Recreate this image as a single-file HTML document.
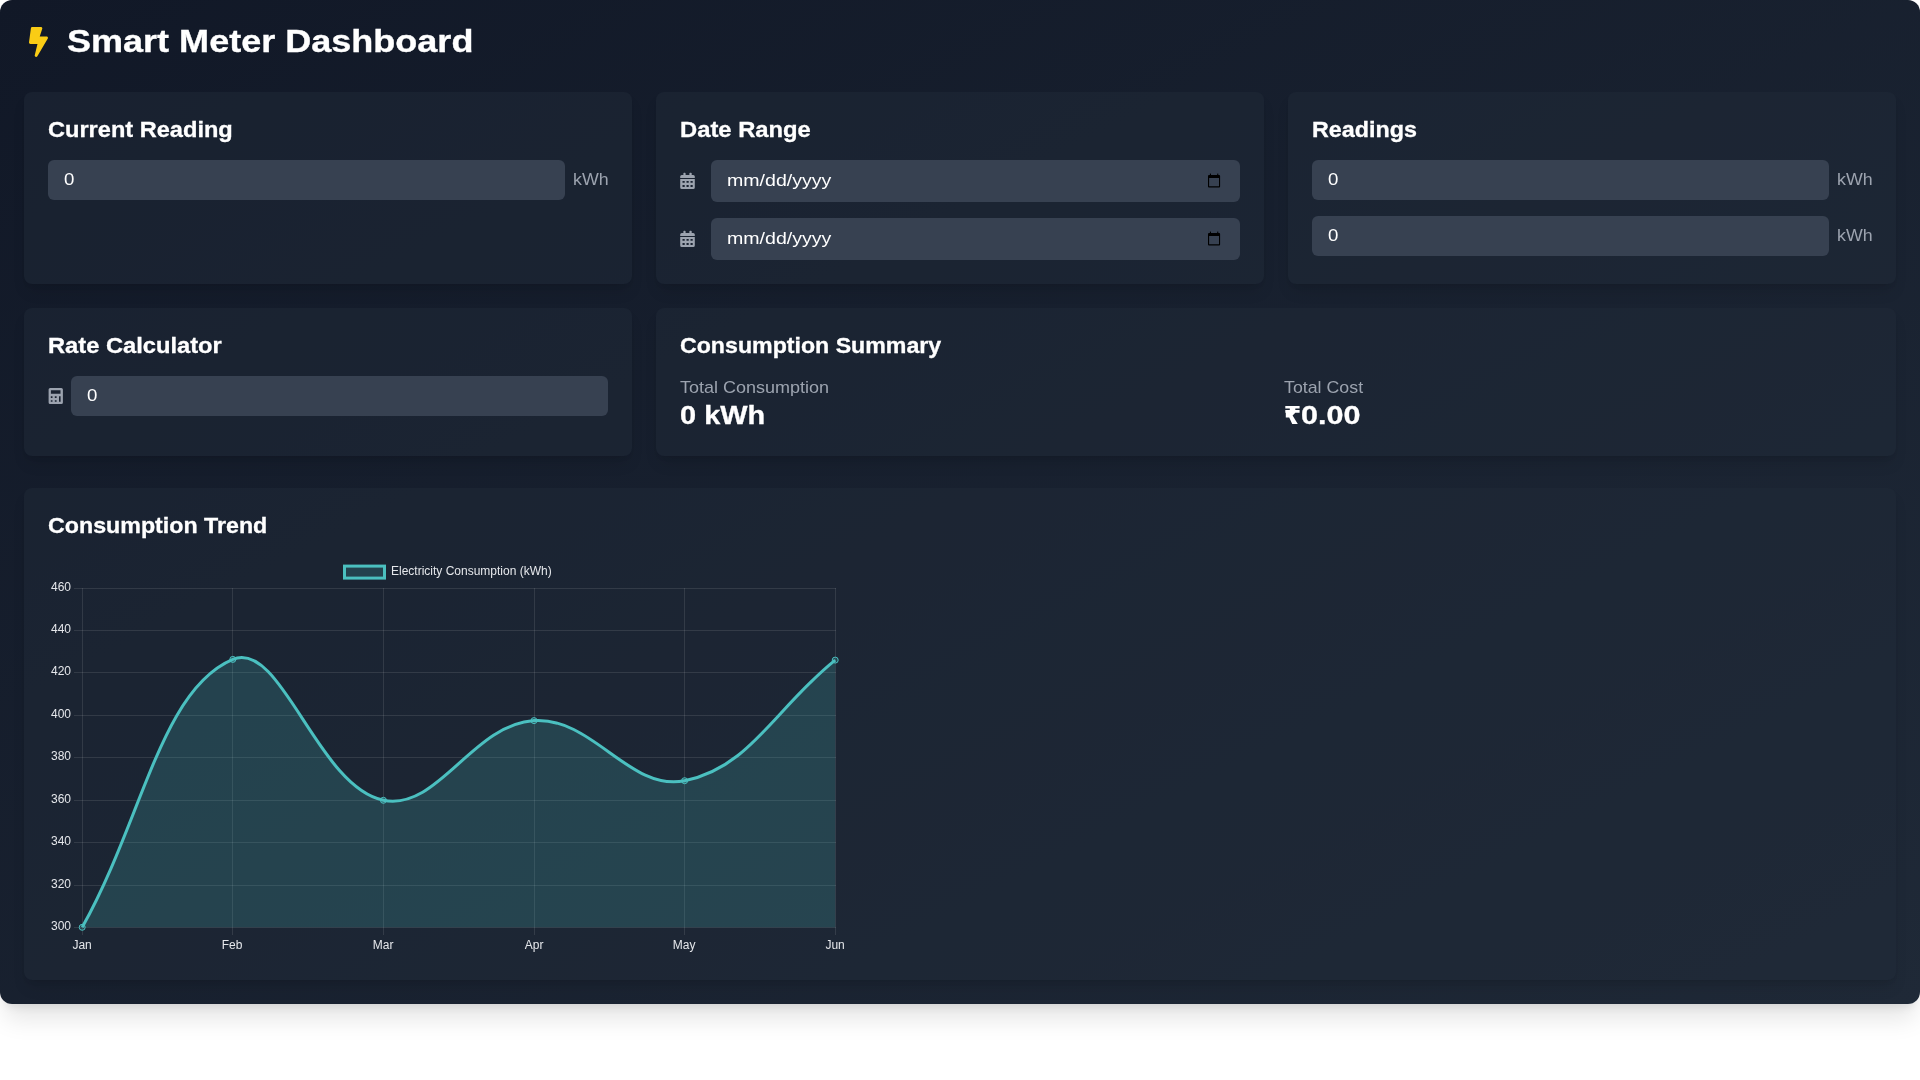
<!DOCTYPE html>
<html>
<head>
<meta charset="utf-8">
<style>
html,body{margin:0;padding:0;background:#ffffff;width:1920px;height:1080px;overflow:hidden;}
*{box-sizing:border-box;}
body{font-family:"Liberation Sans",sans-serif;color:#fff;}
#wrap{position:absolute;left:0;top:0;width:1920px;height:1004px;border-radius:12px;
  background:linear-gradient(to bottom right,#111827,#1f2937);
  box-shadow:0 20px 25px -5px rgba(0,0,0,0.1),0 8px 10px -6px rgba(0,0,0,0.1);}
.abs{position:absolute;}
.card{position:absolute;background:rgba(31,41,55,0.5);border-radius:8px;
  box-shadow:0 10px 15px -3px rgba(0,0,0,0.1),0 4px 6px -4px rgba(0,0,0,0.1);}
.t{position:absolute;white-space:nowrap;}
.t span{display:inline-block;transform-origin:0 50%;will-change:transform;}
.h1{left:67px;top:23.4px;height:36px;line-height:36px;font-size:31.8px;font-weight:bold;-webkit-text-stroke:0.35px #fff;}
.h2{left:24px;top:23.6px;height:28px;line-height:28px;font-size:21.2px;font-weight:bold;-webkit-text-stroke:0.3px #fff;}
.inp{position:absolute;background:#374151;border-radius:6px;height:40px;}
.val{position:absolute;left:16px;top:0;line-height:40px;font-size:16.96px;color:#fff;}
.unit{font-size:16.96px;line-height:24px;color:#9ca3af;}
.big{font-size:25.44px;line-height:32px;font-weight:bold;-webkit-text-stroke:0.3px #fff;}
.ico{position:absolute;}
</style>
</head>
<body>
<div id="wrap">
  <svg class="abs" style="left:29px;top:27px" width="19" height="30" viewBox="0 0 320 512" preserveAspectRatio="none"><path fill="#facc15" d="M296 160H180.6l42.6-129.8C227.2 15 215.7 0 200 0H56C44 0 33.8 8.9 32.2 20.8l-32 240C-1.7 275.2 9.5 288 24 288h118.7L96.6 482.5c-3.6 15.2 8 29.5 23.3 29.5 8.4 0 16.4-4.4 20.8-12l176-304c9.3-15.9-2.2-36-20.7-36z"/></svg>
  <div class="t h1"><span style="transform:scaleX(1.133)">Smart Meter Dashboard</span></div>

  <!-- Card 1 -->
  <div class="card" style="left:24px;top:92px;width:608px;height:192px;">
    <div class="t h2"><span style="transform:scaleX(1.113)">Current Reading</span></div>
    <div class="inp" style="left:24px;top:68px;width:517px;"><div class="t val"><span style="transform:scaleX(1.1)">0</span></div></div>
    <div class="t unit" style="left:549px;top:76px"><span style="transform:scaleX(1.052)">kWh</span></div>
  </div>

  <!-- Card 2 -->
  <div class="card" style="left:656px;top:92px;width:608px;height:192px;">
    <div class="t h2"><span style="transform:scaleX(1.122)">Date Range</span></div>
    <svg class="ico" style="left:24px;top:80px" width="15" height="18" viewBox="0 0 15 18"><g fill="#9ca3af"><rect x="3.4" y="0.8" width="2.2" height="3" rx="0.8"/><rect x="9.4" y="0.8" width="2.3" height="3" rx="0.8"/><path d="M0.2 4.6a1.6 1.6 0 0 1 1.6-1.6h11.4a1.6 1.6 0 0 1 1.6 1.6V5.9H0.2z"/><path fill-rule="evenodd" d="M0.2 7H14.8V15.4a1.6 1.6 0 0 1-1.6 1.6H1.8a1.6 1.6 0 0 1-1.6-1.6z M2.5 9.1h2.2v1.7H2.5z M6.5 9.1h2.2v1.7H6.5z M10.5 9.1h2.2v1.7h-2.2z M2.5 13.1h2.2v1.8H2.5z M6.5 13.1h2.2v1.8H6.5z M10.5 13.1h2.2v1.8h-2.2z"/></g></svg>
    <div class="inp" style="left:55px;top:68px;width:529px;height:42px;">
      <div class="t val" style="line-height:42px"><span style="transform:scaleX(1.155)">mm/dd/yyyy</span></div>
      <svg class="ico" style="left:496px;top:12px" width="15" height="17" viewBox="0 0 15 17"><g fill="#000"><rect x="2.9" y="1.6" width="1.1" height="2"/><rect x="10.2" y="1.6" width="1.1" height="2"/><path fill-rule="evenodd" d="M2 3.1h10.1a1 1 0 0 1 1 1v10.5a1 1 0 0 1-1 1H2a1 1 0 0 1-1-1V4.1a1 1 0 0 1 1-1z M2.1 5.9v8.3h9.9V5.9z"/></g></svg>
    </div>
    <svg class="ico" style="left:24px;top:138px" width="15" height="18" viewBox="0 0 15 18"><g fill="#9ca3af"><rect x="3.4" y="0.8" width="2.2" height="3" rx="0.8"/><rect x="9.4" y="0.8" width="2.3" height="3" rx="0.8"/><path d="M0.2 4.6a1.6 1.6 0 0 1 1.6-1.6h11.4a1.6 1.6 0 0 1 1.6 1.6V5.9H0.2z"/><path fill-rule="evenodd" d="M0.2 7H14.8V15.4a1.6 1.6 0 0 1-1.6 1.6H1.8a1.6 1.6 0 0 1-1.6-1.6z M2.5 9.1h2.2v1.7H2.5z M6.5 9.1h2.2v1.7H6.5z M10.5 9.1h2.2v1.7h-2.2z M2.5 13.1h2.2v1.8H2.5z M6.5 13.1h2.2v1.8H6.5z M10.5 13.1h2.2v1.8h-2.2z"/></g></svg>
    <div class="inp" style="left:55px;top:126px;width:529px;height:42px;">
      <div class="t val" style="line-height:42px"><span style="transform:scaleX(1.155)">mm/dd/yyyy</span></div>
      <svg class="ico" style="left:496px;top:12px" width="15" height="17" viewBox="0 0 15 17"><g fill="#000"><rect x="2.9" y="1.6" width="1.1" height="2"/><rect x="10.2" y="1.6" width="1.1" height="2"/><path fill-rule="evenodd" d="M2 3.1h10.1a1 1 0 0 1 1 1v10.5a1 1 0 0 1-1 1H2a1 1 0 0 1-1-1V4.1a1 1 0 0 1 1-1z M2.1 5.9v8.3h9.9V5.9z"/></g></svg>
    </div>
  </div>

  <!-- Card 3 -->
  <div class="card" style="left:1288px;top:92px;width:608px;height:192px;">
    <div class="t h2"><span style="transform:scaleX(1.10)">Readings</span></div>
    <div class="inp" style="left:24px;top:68px;width:517px;"><div class="t val"><span style="transform:scaleX(1.1)">0</span></div></div>
    <div class="t unit" style="left:549px;top:76px"><span style="transform:scaleX(1.052)">kWh</span></div>
    <div class="inp" style="left:24px;top:124px;width:517px;"><div class="t val"><span style="transform:scaleX(1.1)">0</span></div></div>
    <div class="t unit" style="left:549px;top:132px"><span style="transform:scaleX(1.052)">kWh</span></div>
  </div>

  <!-- Card 4 -->
  <div class="card" style="left:24px;top:308px;width:608px;height:148px;">
    <div class="t h2"><span style="transform:scaleX(1.118)">Rate Calculator</span></div>
    <svg class="ico" style="left:24px;top:79px" width="15" height="18" viewBox="0 0 15 18"><path fill="#9ca3af" fill-rule="evenodd" d="M2.2 0.9h11.1a1.6 1.6 0 0 1 1.6 1.6v12.9a1.6 1.6 0 0 1-1.6 1.6H2.2a1.6 1.6 0 0 1-1.6-1.6V2.5a1.6 1.6 0 0 1 1.6-1.6z M2.9 3.2v3.5h9.6V3.2z M2.8 9.2v1.7h1.7V9.2z M6.8 9.2v1.7h1.8V9.2z M11 9.2v5.6h1.6V9.2z M2.8 13.2v1.6h1.7v-1.6z M6.8 13.2v1.6h1.8v-1.6z"/></svg>
    <div class="inp" style="left:47px;top:68px;width:537px;"><div class="t val"><span style="transform:scaleX(1.1)">0</span></div></div>
  </div>

  <!-- Card 5 -->
  <div class="card" style="left:656px;top:308px;width:1240px;height:148px;">
    <div class="t h2"><span style="transform:scaleX(1.093)">Consumption Summary</span></div>
    <div class="t unit" style="left:24px;top:68px"><span style="transform:scaleX(1.063)">Total Consumption</span></div>
    <div class="t big" style="left:24px;top:91px"><span style="transform:scaleX(1.138)">0 kWh</span></div>
    <div class="t unit" style="left:628px;top:68px"><span style="transform:scaleX(1.05)">Total Cost</span></div>
    <div class="t big" style="left:644.8px;top:91px"><span style="transform:scaleX(1.2)">0.00</span></div>
    <svg class="ico" style="left:626px;top:95px" width="22" height="24" viewBox="0 0 22 24"><path fill="#fff" d="M3.3 3.1 L17.6 3.1 L17.6 5.6 L13.3 5.6 L13.3 7.1 L17.6 7.1 L17.6 9.8 L13.3 9.8 L10.6 12.6 L15.8 20.9 L10.2 20.9 L7.2 14.4 L3.8 14.4 L3.8 9.8 L3.3 9.8 L3.3 7.1 L7.8 7.1 L7.8 5.6 L3.3 5.6Z"/></svg>
  </div>

  <!-- Card 6 -->
  <div class="card" style="left:24px;top:488px;width:1872px;height:492px;">
    <div class="t h2"><span style="transform:scaleX(1.096)">Consumption Trend</span></div>
  </div>
  <div class="abs" style="left:48px;top:556px;width:800px;height:400px;will-change:transform;">
<svg class="abs" style="left:0;top:0" width="800" height="400" viewBox="0 0 800 400">
<path d="M26.0 32.5H788.0 M26.0 74.5H788.0 M26.0 116.5H788.0 M26.0 159.5H788.0 M26.0 201.5H788.0 M26.0 244.5H788.0 M26.0 286.5H788.0 M26.0 329.5H788.0 M26.0 371.5H788.0 M34.5 32.0V379.0 M184.5 32.0V379.0 M335.5 32.0V379.0 M486.5 32.0V379.0 M636.5 32.0V379.0 M787.5 32.0V379.0" stroke="rgba(255,255,255,0.1)" stroke-width="1" fill="none"/>
<path d="M34.20 371.30 C94.44 264.14 112.70 133.80 184.80 103.40 C233.18 83.00 269.43 230.90 335.40 244.30 C389.91 255.38 424.27 168.62 486.00 164.60 C544.75 160.78 581.58 235.75 636.60 224.70 C702.06 211.55 726.96 152.34 787.20 104.10 L787.20 371.30 L34.20 371.30 Z" fill="rgba(75,192,192,0.2)"/>
<path d="M34.20 371.30 C94.44 264.14 112.70 133.80 184.80 103.40 C233.18 83.00 269.43 230.90 335.40 244.30 C389.91 255.38 424.27 168.62 486.00 164.60 C544.75 160.78 581.58 235.75 636.60 224.70 C702.06 211.55 726.96 152.34 787.20 104.10" stroke="rgb(75,192,192)" stroke-width="3" fill="none"/>
<circle cx="34.20" cy="371.30" r="3" fill="rgba(75,192,192,0.2)" stroke="rgb(75,192,192)" stroke-width="1"/>
<circle cx="184.80" cy="103.40" r="3" fill="rgba(75,192,192,0.2)" stroke="rgb(75,192,192)" stroke-width="1"/>
<circle cx="335.40" cy="244.30" r="3" fill="rgba(75,192,192,0.2)" stroke="rgb(75,192,192)" stroke-width="1"/>
<circle cx="486.00" cy="164.60" r="3" fill="rgba(75,192,192,0.2)" stroke="rgb(75,192,192)" stroke-width="1"/>
<circle cx="636.60" cy="224.70" r="3" fill="rgba(75,192,192,0.2)" stroke="rgb(75,192,192)" stroke-width="1"/>
<circle cx="787.20" cy="104.10" r="3" fill="rgba(75,192,192,0.2)" stroke="rgb(75,192,192)" stroke-width="1"/>
<g font-family="Liberation Sans" font-size="12" fill="#e5e7eb">
<text x="23.0" y="35.1" text-anchor="end">460</text>
<text x="23.0" y="77.1" text-anchor="end">440</text>
<text x="23.0" y="119.1" text-anchor="end">420</text>
<text x="23.0" y="162.1" text-anchor="end">400</text>
<text x="23.0" y="204.1" text-anchor="end">380</text>
<text x="23.0" y="247.1" text-anchor="end">360</text>
<text x="23.0" y="289.1" text-anchor="end">340</text>
<text x="23.0" y="332.1" text-anchor="end">320</text>
<text x="23.0" y="374.1" text-anchor="end">300</text>
<text x="34.1" y="393.0" text-anchor="middle">Jan</text>
<text x="184.1" y="393.0" text-anchor="middle">Feb</text>
<text x="335.1" y="393.0" text-anchor="middle">Mar</text>
<text x="486.1" y="393.0" text-anchor="middle">Apr</text>
<text x="636.1" y="393.0" text-anchor="middle">May</text>
<text x="787.1" y="393.0" text-anchor="middle">Jun</text>
<text x="343.0" y="19.0">Electricity Consumption (kWh)</text>
</g>
<rect x="296.5" y="10.1" width="40" height="12" fill="rgba(75,192,192,0.2)" stroke="rgb(75,192,192)" stroke-width="3"/>
</svg>
  </div>
</div>
</body>
</html>
